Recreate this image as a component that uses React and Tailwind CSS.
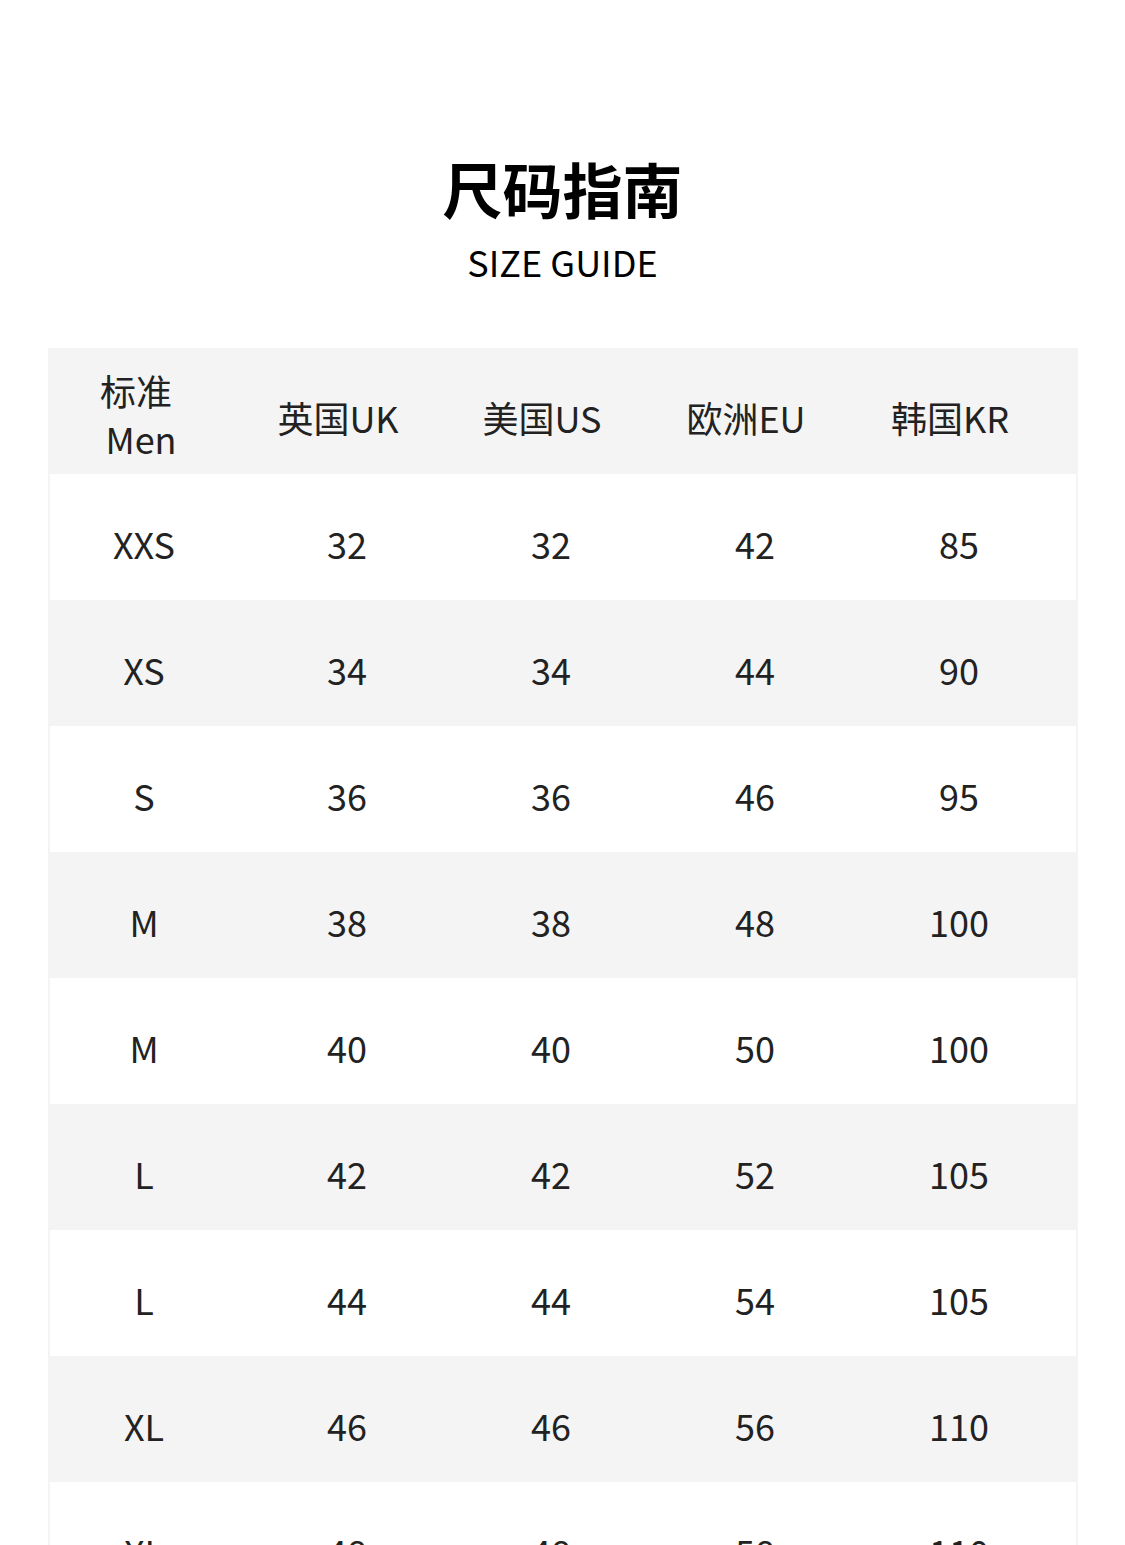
export default function App() {
  const rows = [
    ["XXS", "32", "32", "42", "85"],
    ["XS", "34", "34", "44", "90"],
    ["S", "36", "36", "46", "95"],
    ["M", "38", "38", "48", "100"],
    ["M", "40", "40", "50", "100"],
    ["L", "42", "42", "52", "105"],
    ["L", "44", "44", "54", "105"],
    ["XL", "46", "46", "56", "110"],
    ["XL", "48", "48", "58", "110"],
  ];
  const font = { fontFamily: '"Noto Sans CJK SC", "Noto Sans", sans-serif' };
  return (
    <div className="w-[1125px] h-[1545px] overflow-hidden bg-white text-[#222]" style={font}>
      <div className="pt-[148px] flex flex-col items-center">
        <div className="text-[60px] leading-[80px] font-bold text-black">尺码指南</div>
        <div className="mt-[13px] text-[36px] leading-[40px] text-black">SIZE GUIDE</div>
      </div>
      <div className="mt-[67px] ml-[48px] w-[1030px] bg-[#f4f4f4]">
        <div className="grid grid-cols-[196px_204px_204px_204px_204px] h-[126px] items-center text-[36px]">
          <div className="flex flex-col items-center leading-[48px] -ml-[10px] pt-[5px]">
            <span className="-ml-[10px]">标准</span>
            <span>Men</span>
          </div>
          <div className="text-center pr-[16px] pt-[11px]">英国UK</div>
          <div className="text-center pr-[16px] pt-[11px]">美国US</div>
          <div className="text-center pr-[16px] pt-[11px]">欧洲EU</div>
          <div className="text-center pr-[16px] pt-[11px]">韩国KR</div>
        </div>
        {rows.map((r, i) => (
          <div
            key={i}
            className={
              "grid grid-cols-[196px_204px_204px_204px_204px] h-[126px] items-center text-[36px] mx-[2px] " +
              (i % 2 === 0 ? "bg-white" : "bg-[#f4f4f4]")
            }
          >
            {r.map((c, j) => (
              <div key={j} className={"text-center pt-[11px] " + (j === 0 ? "-ml-[8px]" : "-ml-[2px]")}>
                {c}
              </div>
            ))}
          </div>
        ))}
      </div>
    </div>
  );
}
